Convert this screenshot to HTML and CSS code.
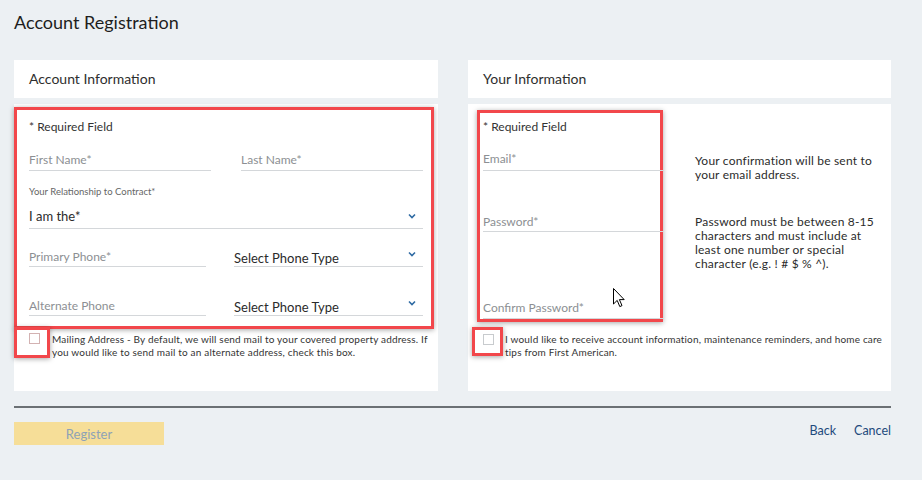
FILE: index.html
```html
<!DOCTYPE html>
<html>
<head>
<meta charset="utf-8">
<link rel="stylesheet" href="styles.css">
</head>
<body>
<div class="page">
  <h1 class="title">Account Registration</h1>
  <div class="cols">
    <section class="col col-left">
      <div class="panel-head">Account Information</div>
      <div class="panel-body">
        <div class="hl hl-left">
          <div class="req">* Required Field</div>
          <div class="grid2 names">
            <div class="field">First Name*</div>
            <div class="field">Last Name*</div>
          </div>
          <div class="small-label">Your Relationship to Contract*</div>
          <div class="field select sel-iam"><span>I am the*</span><svg class="chev" viewBox="0 0 8 6"><path d="M1 1.5 L4 4.5 L7 1.5" /></svg></div>
          <div class="grid2 phones">
            <div class="field phone">Primary Phone*</div>
            <div class="field select sel-type"><span>Select Phone Type</span><svg class="chev" viewBox="0 0 8 6"><path d="M1 1.5 L4 4.5 L7 1.5" /></svg></div>
          </div>
          <div class="grid2 phones phones2">
            <div class="field phone">Alternate Phone</div>
            <div class="field select sel-type"><span>Select Phone Type</span><svg class="chev" viewBox="0 0 8 6"><path d="M1 1.5 L4 4.5 L7 1.5" /></svg></div>
          </div>
        </div>
        <div class="check-row check-left">
          <div class="hl-check"><span class="box box-pink"></span></div>
          <p class="check-text">Mailing Address - By default, we will send mail to your covered property address. If you would like to send mail to an alternate address, check this box.</p>
        </div>
      </div>
    </section>
    <section class="col col-right">
      <div class="panel-head">Your Information</div>
      <div class="panel-body">
        <div class="right-top">
          <div class="hl hl-right">
            <div class="req">* Required Field</div>
            <div class="field email">Email*</div>
            <div class="field pw">Password*</div>
            <div class="field cpw">Confirm Password*</div>
          </div>
          <div class="notes">
            <p class="note note1">Your confirmation will be sent to your email address.</p>
            <p class="note note2">Password must be between 8-15 characters and must include at least one number or special character (e.g. ! # $ % ^).</p>
          </div>
        </div>
        <div class="check-row check-right">
          <div class="hl-check hl-check-r"><span class="box"></span></div>
          <p class="check-text">I would like to receive account information, maintenance reminders, and home care tips from First American.</p>
        </div>
      </div>
    </section>
  </div>
  <div class="footer">
    <button class="register">Register</button>
    <nav class="links"><a>Back</a><a>Cancel</a></nav>
  </div>
</div>
<svg class="cursor" viewBox="0 0 12 20" width="12" height="20"><path d="M0.5 0.5 L0.5 16 L4.2 12.4 L6.8 18.6 L9 17.6 L6.4 11.6 L11.2 11.6 Z" fill="#fff" stroke="#000" stroke-width="1"/></svg>
</body>
</html>
```
FILE: styles.css
```css
html, body {
  margin: 0;
  padding: 0;
  background: #ecf0f3;
  font-family: Lato, "Open Sans", sans-serif;
  color: #2b2b2b;
}
.page {
  width: 877px;
  padding-left: 14px;
  position: relative;
}
.title {
  margin: 0;
  padding-top: 11px;
  font-size: 18px;
  line-height: 22px;
  font-weight: 400;
  color: #1e1e1e;
  height: 49px;
}
.cols {
  display: flex;
  gap: 30px;
}
.col-left { width: 424px; }
.col-right { width: 423px; }
.panel-head {
  background: #fff;
  height: 38px;
  padding-left: 15px;
  font-size: 14px;
  line-height: 38px;
  color: #2e2e2e;
  margin-bottom: 6px;
}
.panel-body {
  background: #fff;
  height: 287px;
  position: relative;
}
.hl {
  border: 3px solid #f2474b;
  box-shadow: 0 1px 5px rgba(0,0,0,.35);
  background: #fff;
  box-sizing: border-box;
}
.hl-left {
  position: relative;
  top: 3px;
  width: 420px;
  height: 222px;
  padding: 9px 0 0 12px;
}
.req {
  font-size: 12px;
  line-height: 16px;
  color: #333;
}
.field {
  font-size: 12px;
  line-height: 16px;
  color: #8c8f93;
  border-bottom: 1px solid #d4d7da;
}
.grid2 {
  display: grid;
  width: 394px;
}
.names {
  grid-template-columns: 182px 182px;
  column-gap: 30px;
  margin-top: 17px;
}
.names .field { padding-bottom: 2px; }
.small-label {
  font-size: 9.5px;
  line-height: 12px;
  color: #666;
  margin-top: 15px;
}
.select {
  display: flex;
  justify-content: space-between;
  align-items: center;
  color: #2b2b2b;
  font-size: 13px;
}
.sel-iam {
  width: 394px;
  margin-top: 10px;
  padding-bottom: 4px;
}
.chev {
  width: 8px;
  height: 6px;
  margin-right: 7px;
  fill: none;
  stroke: #2e6aa3;
  stroke-width: 1.6;
}
.phones {
  grid-template-columns: 177px 189px;
  column-gap: 28px;
  margin-top: 18px;
  align-items: end;
}
.phones2 { margin-top: 29px; }
.phone { padding-bottom: 1px; }
.sel-type { padding-top: 3px; padding-bottom: 0; }
.sel-type .chev { margin-top: -8px; }
.check-row {
  display: flex;
  align-items: flex-start;
}
.hl-check {
  width: 36px;
  height: 31px;
  box-sizing: border-box;
  border: 3px solid #f2474b;
  box-shadow: 0 1px 5px rgba(0,0,0,.35);
  background: #fff;
  position: relative;
  flex: none;
}
.check-left .hl-check { margin-top: 1px; }
.box {
  position: absolute;
  left: 12px;
  top: 3px;
  width: 11px;
  height: 11px;
  box-sizing: border-box;
  border: 1px solid #c8cbce;
  background: #fff;
}
.box-pink { border-color: #d3b2b2; }
.check-text {
  margin: 7px 0 0 2px;
  font-size: 10px;
  line-height: 13px;
  letter-spacing: 0.18px;
  color: #333;
  width: 378px;
}
.col-right .panel-body { padding-top: 6px; box-sizing: border-box; }
.right-top {
  display: flex;
}
.hl-right {
  margin-left: 9px;
  width: 186px;
  height: 212px;
  padding: 6px 0 0 3px;
}
.hl-right .field { width: 180px; }
.email { margin-top: 16px; padding-bottom: 3px; }
.pw { margin-top: 43px; padding-bottom: 1px; }
.cpw { margin-top: 68px; padding-bottom: 2px; }
.notes {
  margin-left: 32px;
  width: 185px;
}
.note {
  margin: 0;
  font-size: 12px;
  line-height: 14px;
  letter-spacing: 0.2px;
  color: #2b2b2b;
}
.note1 { margin-top: 44px; }
.note2 { margin-top: 33px; }
.check-right { margin-left: 4px; margin-top: 5px; }
.hl-check-r { width: 31px; height: 29px; }
.hl-check-r .box { left: 8px; top: 4px; }
.check-right .check-text { margin-top: 6px; width: 378px; }
.footer {
  border-top: 2px solid #6b7074;
  margin-top: 15px;
  display: flex;
  justify-content: space-between;
  align-items: flex-start;
  padding-top: 14px;
}
.register {
  width: 150px;
  height: 23px;
  border: none;
  background: #f6de98;
  color: #8ea2b6;
  font-family: Lato, sans-serif;
  font-size: 13px;
  padding: 0;
}
.links {
  display: flex;
  gap: 18px;
  padding-top: 1px;
}
.links a {
  color: #1d4a7c;
  font-size: 12.5px;
  line-height: 16px;
}
.cursor {
  position: absolute;
  left: 613px;
  top: 288px;
}
```
